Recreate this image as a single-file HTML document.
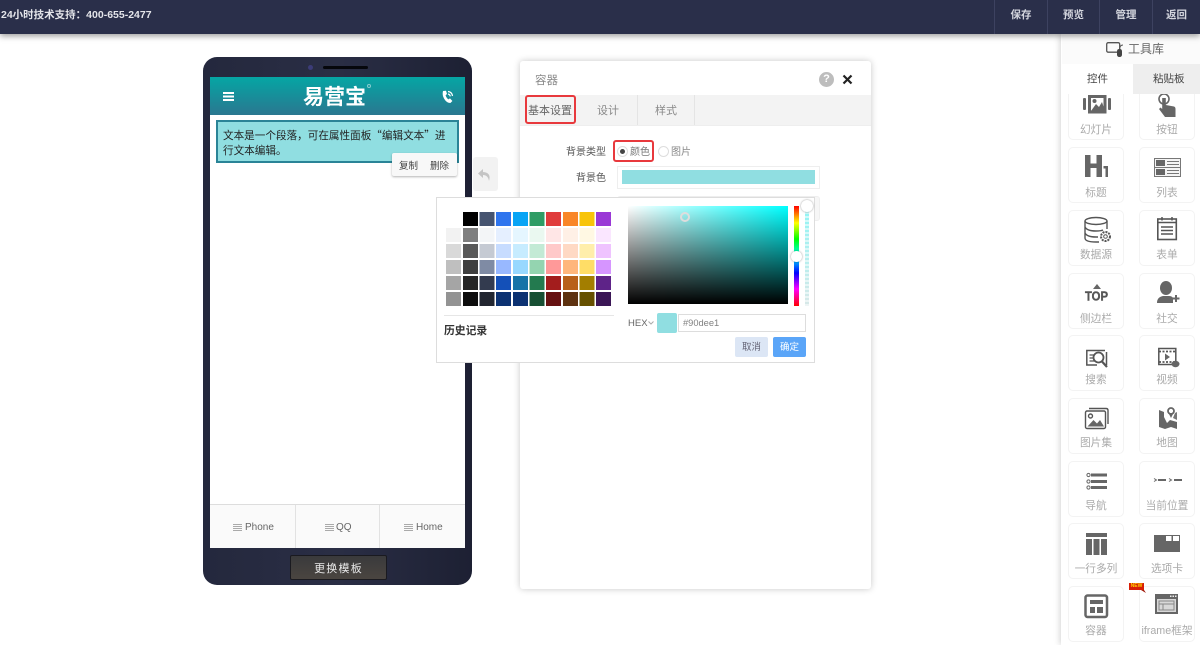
<!DOCTYPE html>
<html lang="zh"><head><meta charset="utf-8"><title>易营宝</title>
<style>
*{box-sizing:border-box}
html,body{margin:0;padding:0;width:1200px;height:645px;overflow:hidden;background:#fff;font-family:"Liberation Sans","Noto Sans CJK SC",sans-serif;font-size:11px;color:#555}
.a{position:absolute}
.t{position:absolute;white-space:nowrap;line-height:14px}
.nav{position:absolute;top:0;height:34px;line-height:31px;text-align:center;color:#d4d6de;font-size:10.5px;font-weight:bold;border-left:1px solid #3d4260}
.card{position:absolute;width:56px;height:56px;border:1px solid #f3f3f3;border-radius:5px;background:#fff;color:#aaa;font-size:10.7px;text-align:center}
.card span{position:absolute;left:-5px;right:-5px;top:38px;line-height:14px;white-space:nowrap}
.card.u span{top:37px}
.card svg{position:absolute;left:11px;top:3px;width:34px;height:30px;fill:#666;stroke:none;overflow:visible}
.rd{position:absolute;border:2px solid #e8393d;border-radius:3px}
</style></head><body>

<!-- top bar -->
<div class="a" style="left:0;top:0;width:1200px;height:34px;background:#2a2f4a;box-shadow:0 2px 6px rgba(0,0,0,.4);z-index:5"></div>
<div style="position:absolute;z-index:6;left:1px;top:8px;color:#e4e5ea;font-size:10.5px;font-weight:bold;line-height:14px;white-space:nowrap">24小时技术支持：400-655-2477</div>
<div class="nav" style="z-index:6;left:994px;width:53px">保存</div>
<div class="nav" style="z-index:6;left:1047px;width:52px">预览</div>
<div class="nav" style="z-index:6;left:1099px;width:53px">管理</div>
<div class="nav" style="z-index:6;left:1152px;width:48px">返回</div>

<!-- phone -->
<div class="a" style="left:203px;top:57px;width:269px;height:528px;border-radius:14px;background:linear-gradient(90deg,#24283d,#2a2e45 50%,#1d2033)"></div>
<div class="a" style="left:308px;top:65px;width:5px;height:5px;border-radius:50%;background:#3c3c78"></div>
<div class="a" style="left:323px;top:66px;width:45px;height:3px;border-radius:2px;background:#06070c"></div>
<div class="a" style="left:210px;top:77px;width:255px;height:471px;background:#fff"></div>
<div class="a" style="left:210px;top:77px;width:255px;height:38px;background:linear-gradient(180deg,#05a6a4,#2a7790)"></div>
<div class="a" style="left:223px;top:92px;width:11px;height:2px;background:#fff;box-shadow:0 3.5px 0 #fff,0 7px 0 #fff"></div>
<div class="t" style="left:303px;top:82px;color:#fff;font-size:21px;line-height:28px;font-weight:bold;font-family:'Noto Sans CJK SC',sans-serif">易营宝</div>
<div class="a" style="left:367px;top:84px;width:4px;height:4px;border-radius:50%;border:1px solid rgba(255,255,255,.5)"></div>
<svg class="a" style="left:441px;top:90px" width="13" height="14" viewBox="0 0 13 14"><path d="M2 1 L5 .8 L6 4 L4.6 5.2 Q5.4 8 7.4 9.4 L9 8.4 L11.4 11 L9.4 13 Q5.5 13 3 8.5 Q1 5 2 1Z" fill="#fff"/><path d="M7 1.5 Q11 2 11.5 6 M7 4 Q9 4.5 9.3 6.4" stroke="#fff" stroke-width="1.2" fill="none"/></svg>

<div class="a" style="left:216px;top:120px;width:243px;height:43px;background:#90dee1;border:2px solid #2a8497"></div>
<div class="t" style="left:223px;top:129px;color:#222;font-size:10.6px;line-height:14.5px;font-family:'Noto Sans CJK SC',sans-serif">文本是一个段落，可在属性面板“编辑文本”进<br>行文本编辑。</div>
<div class="a" style="left:392px;top:153px;width:65px;height:23px;background:#f8f8f8;border-radius:2px;box-shadow:0 1px 2px rgba(0,0,0,.3)"></div>
<div class="t" style="left:399px;top:160px;font-size:9.5px;color:#444">复制</div>
<div class="t" style="left:430px;top:160px;font-size:9.5px;color:#444">删除</div>

<div class="a" style="left:210px;top:504px;width:255px;height:44px;background:#fafafa;border-top:1px solid #ddd"></div>
<div class="a" style="left:295px;top:505px;width:1px;height:43px;background:#e2e2e2"></div>
<div class="a" style="left:379px;top:505px;width:1px;height:43px;background:#e2e2e2"></div>
<div class="a" style="left:233px;top:524px;width:9px;height:1px;background:#aaa;box-shadow:0 2px 0 #aaa,0 4px 0 #aaa,0 6px 0 #aaa"></div>
<div class="t" style="left:245px;top:521px;font-size:10px;color:#666">Phone</div>
<div class="a" style="left:325px;top:524px;width:9px;height:1px;background:#aaa;box-shadow:0 2px 0 #aaa,0 4px 0 #aaa,0 6px 0 #aaa"></div>
<div class="t" style="left:336px;top:521px;font-size:10px;color:#666">QQ</div>
<div class="a" style="left:404px;top:524px;width:9px;height:1px;background:#aaa;box-shadow:0 2px 0 #aaa,0 4px 0 #aaa,0 6px 0 #aaa"></div>
<div class="t" style="left:416px;top:521px;font-size:10px;color:#666">Home</div>
<div class="a" style="left:290px;top:555px;width:97px;height:25px;border-radius:2px;background:linear-gradient(180deg,#3a3a3c,#4a4540);border:1px solid #1a1a20"></div>
<div class="t" style="left:290px;top:562px;width:97px;text-align:center;color:#e8e8e8;font-size:11px;letter-spacing:1.2px">更换模板</div>

<!-- undo -->
<div class="a" style="left:473px;top:157px;width:25px;height:34px;background:#f2f2f2;border-radius:3px"></div>
<svg class="a" style="left:477px;top:168px" width="16" height="15" viewBox="0 0 16 15"><path d="M6 1 L1 5.5 L6 10 V7 Q11 7 12 13 Q14.5 4.5 6 4Z" fill="#c4c4c4"/></svg>

<!-- panel -->
<div class="a" style="left:520px;top:61px;width:351px;height:528px;background:#fff;border-radius:3px;box-shadow:0 0 7px rgba(0,0,0,.22)"></div>
<div class="t" style="left:535px;top:74px;font-size:11.5px;color:#888">容器</div>
<div class="a" style="left:819px;top:72px;width:15px;height:15px;border-radius:50%;background:#bdbdbd;color:#fff;font-size:11px;font-weight:bold;line-height:15px;text-align:center">?</div>
<svg class="a" style="left:842px;top:74px" width="11" height="11" viewBox="0 0 11 11"><path d="M1.5 1.5 L9.5 9.5 M9.5 1.500 L1.5 9.5" stroke="#222" stroke-width="2.2"/></svg>
<div class="a" style="left:520px;top:95px;width:351px;height:31px;background:#f3f3f3;border-bottom:1px solid #eee"></div>
<div class="a" style="left:637px;top:95px;width:1px;height:30px;background:#e4e4e4"></div>
<div class="a" style="left:694px;top:95px;width:1px;height:30px;background:#e4e4e4"></div>
<div class="t" style="left:528px;top:104px;font-size:11px;color:#666">基本设置</div>
<div class="t" style="left:597px;top:104px;font-size:11px;color:#888">设计</div>
<div class="t" style="left:655px;top:104px;font-size:11px;color:#888">样式</div>
<div class="rd" style="left:525px;top:95px;width:51px;height:29px"></div>
<div class="t" style="left:566px;top:146px;font-size:10px;color:#555">背景类型</div>
<div class="rd" style="left:613px;top:140px;width:41px;height:22px"></div>
<div class="a" style="left:617px;top:146px;width:11px;height:11px;border-radius:50%;border:1px solid #ddd;background:#fff"></div>
<div class="a" style="left:620px;top:149px;width:5px;height:5px;border-radius:50%;background:#444"></div>
<div class="t" style="left:630px;top:146px;font-size:10px;color:#777">颜色</div>
<div class="a" style="left:658px;top:146px;width:11px;height:11px;border-radius:50%;border:1px solid #ddd;background:#fff"></div>
<div class="t" style="left:671px;top:146px;font-size:10px;color:#888">图片</div>
<div class="t" style="left:576px;top:172px;font-size:10px;color:#555">背景色</div>
<div class="a" style="left:617px;top:166px;width:203px;height:23px;border:1px solid #eee;background:#fff"></div>
<div class="a" style="left:622px;top:170px;width:193px;height:14px;background:#90dee1"></div>
<div class="a" style="left:617px;top:196px;width:203px;height:25px;border:1px solid #eee;border-radius:3px;background:#f6f6f6"></div>

<!-- color picker -->
<div class="a" style="left:436px;top:197px;width:379px;height:166px;background:#fff;border:1px solid #ddd;z-index:3"></div>
<svg class="a" style="left:440px;top:205px;z-index:4" width="180" height="130" viewBox="440 205 180 130" shape-rendering="crispEdges">
<g>
<rect x="463" y="212" width="15" height="14" fill="#000"/><rect x="479.500" y="212" width="15" height="14" fill="#465470"/><rect x="496" y="212" width="15" height="14" fill="#2f75ee"/><rect x="513" y="212" width="15" height="14" fill="#08a4f5"/><rect x="529.500" y="212" width="15" height="14" fill="#2f9c65"/><rect x="546" y="212" width="15" height="14" fill="#e03c3c"/><rect x="563" y="212" width="15" height="14" fill="#f98628"/><rect x="579.500" y="212" width="15" height="14" fill="#f8c409"/><rect x="596" y="212" width="15" height="14" fill="#9a38d6"/>
<rect x="446" y="228" width="15" height="14" fill="#f2f2f2"/><rect x="463" y="228" width="15" height="14" fill="#7f7f7f"/><rect x="479.500" y="228" width="15" height="14" fill="#f3f5f7"/><rect x="496" y="228" width="15" height="14" fill="#e5efff"/><rect x="513" y="228" width="15" height="14" fill="#e5f6ff"/><rect x="529.500" y="228" width="15" height="14" fill="#eaf8f0"/><rect x="546" y="228" width="15" height="14" fill="#ffe6e6"/><rect x="563" y="228" width="15" height="14" fill="#fff0e6"/><rect x="579.500" y="228" width="15" height="14" fill="#fff8e3"/><rect x="596" y="228" width="15" height="14" fill="#fae6ff"/>
<rect x="446" y="244" width="15" height="14" fill="#d9d9d9"/><rect x="463" y="244" width="15" height="14" fill="#595959"/><rect x="479.500" y="244" width="15" height="14" fill="#c5cad3"/><rect x="496" y="244" width="15" height="14" fill="#c7dcff"/><rect x="513" y="244" width="15" height="14" fill="#c7ecff"/><rect x="529.500" y="244" width="15" height="14" fill="#c3ead5"/><rect x="546" y="244" width="15" height="14" fill="#ffc9c9"/><rect x="563" y="244" width="15" height="14" fill="#ffd9c4"/><rect x="579.500" y="244" width="15" height="14" fill="#ffeeab"/><rect x="596" y="244" width="15" height="14" fill="#efc3ff"/>
<rect x="446" y="260" width="15" height="14" fill="#bfbfbf"/><rect x="463" y="260" width="15" height="14" fill="#3f3f3f"/><rect x="479.500" y="260" width="15" height="14" fill="#7f8ba4"/><rect x="496" y="260" width="15" height="14" fill="#98b8ff"/><rect x="513" y="260" width="15" height="14" fill="#98d8ff"/><rect x="529.500" y="260" width="15" height="14" fill="#94d4b0"/><rect x="546" y="260" width="15" height="14" fill="#ff9999"/><rect x="563" y="260" width="15" height="14" fill="#ffb67c"/><rect x="579.500" y="260" width="15" height="14" fill="#ffdd66"/><rect x="596" y="260" width="15" height="14" fill="#d695ff"/>
<rect x="446" y="276" width="15" height="14" fill="#a5a5a5"/><rect x="463" y="276" width="15" height="14" fill="#262626"/><rect x="479.500" y="276" width="15" height="14" fill="#333b4f"/><rect x="496" y="276" width="15" height="14" fill="#1450b8"/><rect x="513" y="276" width="15" height="14" fill="#1673a8"/><rect x="529.500" y="276" width="15" height="14" fill="#237a4f"/><rect x="546" y="276" width="15" height="14" fill="#a31d1d"/><rect x="563" y="276" width="15" height="14" fill="#b8601a"/><rect x="579.500" y="276" width="15" height="14" fill="#a37e00"/><rect x="596" y="276" width="15" height="14" fill="#5e2388"/>
<rect x="446" y="292" width="15" height="14" fill="#939393"/><rect x="463" y="292" width="15" height="14" fill="#0d0d0d"/><rect x="479.500" y="292" width="15" height="14" fill="#222630"/><rect x="496" y="292" width="15" height="14" fill="#0c3272"/><rect x="513" y="292" width="15" height="14" fill="#0c3272"/><rect x="529.500" y="292" width="15" height="14" fill="#174f33"/><rect x="546" y="292" width="15" height="14" fill="#661111"/><rect x="563" y="292" width="15" height="14" fill="#5e3210"/><rect x="579.500" y="292" width="15" height="14" fill="#665000"/><rect x="596" y="292" width="15" height="14" fill="#3b1656"/>
</g>
<rect x="444" y="315" width="170" height="1" fill="#e6e6e6"/>
</svg>
<div class="t" style="left:444px;top:324px;font-size:10.8px;font-weight:bold;color:#333;z-index:4">历史记录</div>
<div class="a" style="left:628px;top:206px;width:160px;height:98px;z-index:4;background:linear-gradient(180deg,rgba(0,0,0,0),#000),linear-gradient(90deg,#fff,#0ff)"></div>
<div class="a" style="left:680px;top:212px;width:10px;height:10px;border-radius:50%;border:2.5px solid #ddd;z-index:4"></div>
<div class="a" style="left:794px;top:206px;width:5px;height:100px;z-index:4;background:linear-gradient(180deg,#f00,#ff0 17%,#0f0 33%,#0ff 50%,#00f 67%,#f0f 83%,#f00)"></div>
<div class="a" style="left:805px;top:206px;width:4px;height:100px;z-index:4;background:repeating-linear-gradient(180deg,rgba(255,255,255,0) 0 2px,rgba(255,255,255,.55) 2px 4px),linear-gradient(180deg,#8ff5f5,#d8e8e8)"></div>
<div class="a" style="left:791px;top:251px;width:11px;height:11px;border-radius:50%;background:#fff;box-shadow:0 0 2px rgba(0,0,0,.4);z-index:4"></div>
<div class="a" style="left:801px;top:200px;width:12px;height:12px;border-radius:50%;background:#fff;box-shadow:0 0 2px rgba(0,0,0,.4);z-index:4"></div>
<div class="t" style="left:628px;top:317px;font-size:9.5px;color:#666;z-index:4">HEX</div>
<svg class="a" style="left:648px;top:321px;z-index:4" width="6" height="4" viewBox="0 0 6 4"><path d="M.5 .5 L3 3 L5.500 .5" fill="none" stroke="#aaa"/></svg>
<div class="a" style="left:657px;top:313px;width:20px;height:20px;border-radius:2px;background:#90dee1;z-index:4"></div>
<div class="a" style="left:678px;top:314px;width:128px;height:18px;border:1px solid #ddd;background:#fff;z-index:4;color:#808080;font-size:9.3px;line-height:17px;padding-left:4px">#90dee1</div>
<div class="a" style="left:735px;top:337px;width:33px;height:20px;background:#dce6f5;border-radius:2px;color:#667;font-size:9.5px;line-height:22px;text-align:center;z-index:4">取消</div>
<div class="a" style="left:773px;top:337px;width:33px;height:20px;background:#5aa5f8;border-radius:2px;color:#fff;font-size:9.5px;line-height:22px;text-align:center;z-index:4">确定</div>

<!-- sidebar -->
<div class="a" style="left:1061px;top:34px;width:139px;height:611px;background:#fff;box-shadow:-1px 0 6px rgba(0,0,0,.18)"></div>
<div class="a" style="left:1062px;top:35px;width:138px;height:29px;background:#fbfbfb"></div>
<svg class="a" style="left:1106px;top:42px" width="19" height="16" viewBox="0 0 19 16"><rect x=".7" y=".7" width="13" height="9.500" rx="1.500" fill="none" stroke="#555" stroke-width="1.300"/><rect x="11" y="7" width="5" height="8" rx="2.200" fill="#444"/><path d="M13.500 7 Q14 3 17 3" stroke="#555" fill="none"/></svg>
<div class="t" style="left:1128px;top:42px;font-size:12px;color:#666">工具库</div>
<div class="a" style="left:1133px;top:64px;width:67px;height:30px;background:#eee"></div>
<div class="t" style="left:1087px;top:72px;font-size:10.5px;color:#444">控件</div>
<div class="t" style="left:1153px;top:72px;font-size:10.5px;color:#444">粘贴板</div>

<div style="position:absolute;left:1062px;top:94px;width:138px;height:551px;overflow:hidden">
<!-- row1 -->
<div class="card" style="left:6px;top:-10px"><svg viewBox="0 0 34 30"><rect x="9.500" y="8.500" width="15.500" height="15.500" fill="none" stroke="#666" stroke-width="3"/><path d="M11 23 L16 16 L19 19 L22 14 L25 23Z"/><circle cx="14.500" cy="13" r="2"/><rect x="3" y="10" width="3" height="12" rx="1"/><rect x="28" y="10" width="3" height="12" rx="1"/></svg><span>幻灯片</span></div>
<div class="card" style="left:77px;top:-10px"><svg viewBox="0 0 34 30"><circle cx="13" cy="11" r="5" fill="none" stroke="#666" stroke-width="1.600"/><path d="M11.200 10 h3.600 V17 L23 18.500 Q24.500 19 24.500 21 V29 H14 L8 21 L9.500 19.500 L11.200 21Z"/></svg><span>按钮</span></div>
<!-- row2 -->
<div class="card" style="left:6px;top:53px"><svg viewBox="0 0 34 30"><path d="M5 4 h5.500 v8.500 h6 v-8.500 h5.500 v22 h-5.500 v-9 h-6 v9 h-5.500Z"/><path d="M23.500 15 h4.500 v11 h-2.500 v-8.500 h-2Z"/></svg><span>标题</span></div>
<div class="card" style="left:77px;top:53px"><svg viewBox="0 0 34 30"><rect x="3.500" y="7.500" width="26" height="18" fill="#f4f4f4" stroke="#777"/><rect x="5" y="9" width="9" height="6" fill="#666"/><rect x="5" y="18" width="9" height="6" fill="#666"/><path d="M16 10 h12 v1 h-12Z M16 13 h12 v1 h-12Z M16 19 h12 v1 h-12Z M16 22 h12 v1 h-12Z M3 16 h27 v1 h-27Z" fill="#777"/></svg><span>列表</span></div>
<!-- row3 -->
<div class="card u" style="left:6px;top:116px"><svg viewBox="0 0 34 30"><g fill="none" stroke="#555" stroke-width="1.400"><ellipse cx="16" cy="7" rx="11" ry="3.500"/><path d="M5 7 V24 Q5 28 16 28 H19 M27 7 V15 M5 13 Q7 17 16 17 Q21 17 23 16 M5 19 Q7 23 16 23 H18"/><circle cx="25.500" cy="22.500" r="4.500" stroke-width="2" stroke-dasharray="2 1"/><circle cx="25.500" cy="22.500" r="1.800" stroke-width="1"/></g></svg><span>数据源</span></div>
<div class="card u" style="left:77px;top:116px"><svg viewBox="0 0 34 30"><g fill="none" stroke="#555"><rect x="6.800" y="5" width="18.500" height="20.500" stroke-width="1.600"/><path d="M6.800 8.500 H25.300 M11 3 v3.500 M21 3 v3.500" stroke-width="1.500"/><path d="M10 13 H22 M10 16.500 H22 M10 20 H22" stroke-width="1.600"/></g></svg><span>表单</span></div>
<!-- row4 -->
<div class="card" style="left:6px;top:179px"><svg viewBox="0 0 34 30"><path d="M17 7 L21 12 H13Z"/><text x="16.500" y="23.500" text-anchor="middle" font-family="Liberation Sans" font-weight="bold" font-size="12.500" textLength="23" lengthAdjust="spacingAndGlyphs" fill="#555" stroke="#555" stroke-width=".4">TOP</text></svg><span>侧边栏</span></div>
<div class="card" style="left:77px;top:179px"><svg viewBox="0 0 34 30"><ellipse cx="15" cy="11" rx="6" ry="7"/><path d="M6 26 Q6 20 12 19 H18 Q21 19 22 21 V26Z"/><path d="M24 18 h2 v2.500 h2.500 v2 h-2.500 v2.500 h-2 v-2.500 h-2.500 v-2 h2.500Z"/></svg><span>社交</span></div>
<!-- row5 -->
<div class="card u" style="left:6px;top:241px"><svg viewBox="0 0 34 30"><g fill="none" stroke="#555"><path d="M25 11.500 H6.800 V26 H17" stroke-width="1.500"/><path d="M26.500 26 V13" stroke-width="1.500"/><circle cx="18.500" cy="18.500" r="5" stroke-width="1.800"/><path d="M22 22.500 L27 28" stroke-width="2.200"/><path d="M9.500 16 h5 M9.500 19 h4 M9.500 22 h5" stroke-width="1.200"/></g></svg><span>搜索</span></div>
<div class="card u" style="left:77px;top:241px"><svg viewBox="0 0 34 30"><rect x="7.800" y="9.500" width="17" height="16" fill="none" stroke="#555" stroke-width="1.500"/><path d="M8 12.500 H25 M8 23 H25" stroke="#555" stroke-width="1.800" stroke-dasharray="2 1.500"/><path d="M14 14.500 L19 18 L14 21.500Z"/><ellipse cx="24.500" cy="25" rx="4" ry="3.200"/></svg><span>视频</span></div>
<!-- row6 -->
<div class="card u" style="left:6px;top:304px"><svg viewBox="0 0 34 30"><g fill="none" stroke="#555" stroke-width="1.400"><rect x="5.500" y="9" width="20" height="17.500" rx="1.500"/><path d="M9 6.500 H26 Q28 6.500 28 8.500 V22"/><circle cx="10.500" cy="14" r="2"/></g><path d="M7.500 24.500 L13.500 18 L17 21.500 L20 18 L24 24.500Z"/></svg><span>图片集</span></div>
<div class="card u" style="left:77px;top:304px"><svg viewBox="0 0 34 30"><path d="M8 8 L13 10 V15 L16 21 L19 18 L26 20 V27 L20 25 L14 27 L8 25Z"/><circle cx="20" cy="9" r="3" fill="none" stroke="#666" stroke-width="1.800"/><path d="M17.500 11 L20 16 L22.500 11Z"/><path d="M24 11 L26 10 V18 L22 16Z" fill="#777"/></svg><span>地图</span></div>
<!-- row7 -->
<div class="card u" style="left:6px;top:367px"><svg viewBox="0 0 34 30"><g fill="none" stroke="#666" stroke-width="1"><circle cx="8.500" cy="10" r="1.600"/><circle cx="8.500" cy="16.500" r="1.600"/><circle cx="8.500" cy="22.500" r="1.600"/></g><rect x="11" y="8.500" width="16" height="3"/><rect x="11" y="15" width="16" height="3"/><rect x="11" y="21" width="16" height="3"/></svg><span>导航</span></div>
<div class="card u" style="left:77px;top:367px"><svg viewBox="0 0 34 30"><path d="M3 13.500 L5.500 15 L3 16.500" fill="none" stroke="#666"/><rect x="7" y="14" width="8" height="2"/><path d="M18 13.500 L20.500 15 L18 16.500" fill="none" stroke="#666"/><rect x="23" y="14" width="8" height="2"/></svg><span>当前位置</span></div>
<!-- row8 -->
<div class="card" style="left:6px;top:429px"><svg viewBox="0 0 34 30"><rect x="6" y="6" width="21" height="4"/><rect x="6" y="12" width="6" height="16"/><rect x="13.500" y="12" width="6" height="16"/><rect x="21" y="12" width="6" height="16"/></svg><span>一行多列</span></div>
<div class="card" style="left:77px;top:429px"><svg viewBox="0 0 34 30"><path d="M3 8 H29 V25 H3Z"/><rect x="15" y="9" width="5.500" height="5" fill="#fff"/><rect x="22" y="9" width="6" height="5" fill="#fff"/></svg><span>选项卡</span></div>
<!-- row9 -->
<div class="card u" style="left:6px;top:492px"><svg viewBox="0 0 34 30"><rect x="5.500" y="5.500" width="21.500" height="21.500" rx="2" fill="none" stroke="#666" stroke-width="2.500"/><rect x="10" y="10" width="13" height="4"/><rect x="10" y="17" width="5" height="6"/><rect x="17" y="17" width="6" height="6"/></svg><span>容器</span></div>
<div class="card u" style="left:77px;top:492px"><svg viewBox="0 0 34 30"><path d="M4 4 H27 V24 H4Z" fill="#666"/><rect x="6" y="9" width="19" height="13" fill="#d8d8d8"/><rect x="8" y="11" width="15" height="9" fill="none" stroke="#888"/><path d="M8 14 H23 M12 14 V20" stroke="#888"/><rect x="19" y="5.500" width="1.500" height="1.500" fill="#eee"/><rect x="21.500" y="5.500" width="1.500" height="1.500" fill="#eee"/><rect x="24" y="5.500" width="1.500" height="1.500" fill="#eee"/></svg><span>iframe框架</span></div>
</div>
<div class="a" style="left:1129px;top:583px;width:15px;height:7px;background:#d81e06;color:#ffd400;font-size:5px;line-height:7px;text-align:center;font-weight:bold">NEW</div>
<svg class="a" style="left:1141px;top:590px" width="5" height="3" viewBox="0 0 5 3"><path d="M0 0 H3 L5 3Z" fill="#a01505"/></svg>
</body></html>
